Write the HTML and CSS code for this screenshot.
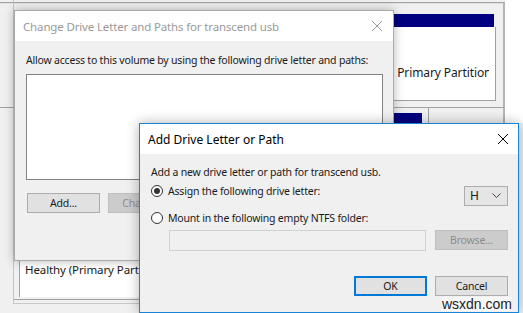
FILE: index.html
```html
<!DOCTYPE html>
<html>
<head>
  <meta charset="utf-8">
  <title>Add Drive Letter or Path</title>
  <link rel="stylesheet" href="styles.css">
</head>
<body>
  <div class="desktop">
    <!-- Disk management window behind the dialogs -->
    <div class="bg-top-line"></div>
    <div class="bg-left-line"></div>
    <div class="bg-left-hline"></div>
    <div class="bg-right-line"></div>
    <div class="bg-right-white"></div>

    <div class="vol-bar"></div>
    <div class="vol-box">
      <span class="vol-text">, Primary Partition</span>
    </div>
    <div class="vol-sep"></div>
    <div class="vol-bar small"></div>
    <div class="vol-tick"></div>

    <div class="part-box">
      <span>Healthy (Primary Parti</span>
    </div>
    <div class="part-line one"></div>
    <div class="part-line two"></div>

    <!-- Change Drive Letter and Paths (inactive) -->
    <div class="window change-dlg">
      <div class="titlebar">
        <span class="title">Change Drive Letter and Paths for transcend usb</span>
        <svg class="close" width="12" height="12" viewBox="0 0 12 12">
          <path d="M1 1 L11 11 M11 1 L1 11" stroke="currentColor" stroke-width="1" fill="none"/>
        </svg>
      </div>
      <div class="body">
        <div class="label">Allow access to this volume by using the following drive letter and paths:</div>
        <div class="listbox"></div>
        <div class="btn-row">
          <div class="btn">Add...</div>
          <div class="btn disabled">Change...</div>
        </div>
      </div>
    </div>

    <!-- Add Drive Letter or Path (active) -->
    <div class="window add-dlg">
      <div class="titlebar">
        <span class="title">Add Drive Letter or Path</span>
        <svg class="close" width="12" height="12" viewBox="0 0 12 12">
          <path d="M1 1 L11 11 M11 1 L1 11" stroke="currentColor" stroke-width="1" fill="none"/>
        </svg>
      </div>
      <div class="body">
        <div class="intro">Add a new drive letter or path for transcend usb.</div>
        <div class="option-row">
          <span class="radio checked"></span>
          <span class="option-label">Assign the following drive letter:</span>
          <div class="combo">
            <span>H</span>
            <svg width="9" height="6" viewBox="0 0 9 6">
              <path d="M0.5 0.5 L4.5 4.5 L8.5 0.5" stroke="#444" stroke-width="1" fill="none"/>
            </svg>
          </div>
        </div>
        <div class="option-row second">
          <span class="radio"></span>
          <span class="option-label">Mount in the following empty NTFS folder:</span>
        </div>
        <div class="folder-row">
          <div class="textbox"></div>
          <div class="btn disabled">Browse...</div>
        </div>
        <div class="dlg-buttons">
          <div class="btn default">OK</div>
          <div class="btn">Cancel</div>
        </div>
      </div>
      <div class="watermark">wsxdn.com</div>
    </div>
  </div>
</body>
</html>
```

FILE: styles.css
```css
* { box-sizing: border-box; }

body {
  margin: 0;
  font-family: "Noto Sans", "Open Sans", Arial, sans-serif;
  font-size: 10.5px;
  letter-spacing: -0.2px;
  color: #1a1a1a;
  background: #f0f0f0;
}

.desktop {
  position: relative;
  width: 523px;
  height: 313px;
  overflow: hidden;
  background: #f0f0f0;
}

/* background window pieces */
.bg-top-line {
  position: absolute;
  left: 0;
  top: 2px;
  width: 505px;
  height: 2px;
  background: #a5a5a5;
  border-bottom: 1px solid #e0e0e0;
}

.bg-left-line {
  position: absolute;
  left: 13px;
  top: 0;
  width: 1px;
  height: 304px;
  background: #c4c4c4;
}

.bg-left-hline {
  position: absolute;
  left: 0;
  top: 107px;
  width: 14px;
  height: 1px;
  background: #a0a0a0;
}

.bg-right-line {
  position: absolute;
  left: 503px;
  top: 3px;
  width: 2px;
  height: 120px;
  background: #b4b4b4;
}

.bg-right-white {
  position: absolute;
  left: 505px;
  top: 0;
  width: 18px;
  height: 123px;
  background: #fff;
}

.vol-bar {
  position: absolute;
  left: 380px;
  top: 14px;
  width: 114px;
  height: 13px;
  background: #000080;
}

.vol-bar.small {
  top: 113px;
  width: 42px;
  height: 10px;
}

.vol-box {
  position: absolute;
  left: 380px;
  top: 27px;
  width: 116px;
  height: 74px;
  background: #fff;
  border-right: 1px solid #a0a0a0;
  border-bottom: 1px solid #a0a0a0;
  padding: 38px 0 0 11px;
  white-space: nowrap;
  overflow: hidden;
  font-size: 12px;
  letter-spacing: -0.1px;
}

.vol-text {
  display: block;
  width: 98px;
  overflow: hidden;
  line-height: 16px;
}

.vol-sep {
  position: absolute;
  left: 380px;
  top: 107px;
  width: 124px;
  height: 1px;
  background: #a0a0a0;
}

.vol-tick {
  position: absolute;
  left: 428px;
  top: 107px;
  width: 1px;
  height: 16px;
  background: #a0a0a0;
}

.part-box {
  position: absolute;
  left: 19px;
  top: 250px;
  width: 120px;
  height: 47px;
  background: #fff;
  border-left: 1px solid #a0a0a0;
  padding: 12px 0 0 5px;
  white-space: nowrap;
  overflow: hidden;
  font-size: 11.5px;
  letter-spacing: -0.1px;
}

.part-line {
  position: absolute;
  left: 14px;
  width: 130px;
  height: 1px;
  background: #a0a0a0;
}

.part-line.one { top: 299px; }
.part-line.two { top: 303px; background: #c8c8c8; }

/* dialogs */
.window {
  position: absolute;
  display: flex;
  flex-direction: column;
  background: #f0f0f0;
}

.titlebar {
  display: flex;
  align-items: center;
  justify-content: space-between;
  height: 30px;
  background: #fff;
  font-size: 12px;
  letter-spacing: 0;
  flex-shrink: 0;
}

.change-dlg {
  left: 14px;
  top: 10px;
  width: 380px;
  height: 251px;
  border: 1px solid #aaa;
  box-shadow: 0 0 10px rgba(0,0,0,0.28);
}

.change-dlg .titlebar {
  padding: 0 10px 0 8px;
  color: #9a9a9a;
  font-size: 11.5px;
  letter-spacing: -0.15px;
}

.change-dlg .body {
  padding: 11px 10px 0 11px;
}

.label {
  line-height: 16px;
  margin-bottom: 6px;
  white-space: nowrap;
}

.listbox {
  width: 357px;
  height: 106px;
  background: #fff;
  border: 1px solid #828282;
}

.btn-row {
  display: flex;
  gap: 8px;
  margin-top: 13px;
  padding-left: 1px;
}

.btn {
  width: 73px;
  height: 20px;
  background: #e1e1e1;
  border: 1px solid #adadad;
  display: flex;
  align-items: center;
  justify-content: center;
  flex-shrink: 0;
}

.btn.disabled {
  background: #cccccc;
  border-color: #bfbfbf;
  color: #8c8c8c;
}

.btn.default {
  border: 2px solid #0078d7;
}

.add-dlg {
  left: 139px;
  top: 123px;
  width: 380px;
  height: 190px;
  border: 1px solid #1883d7;
  box-shadow: 0 0 12px rgba(0,0,0,0.3);
}

.add-dlg .titlebar {
  padding: 0 9px 0 8px;
  color: #000;
}

.add-dlg .body {
  padding: 10px 10px 0 11px;
  display: flex;
  flex-direction: column;
}

.intro {
  line-height: 16px;
}

.option-row {
  display: flex;
  align-items: center;
  height: 20px;
  margin-top: 1px;
}

.option-row.second {
  margin-top: 7px;
}

.radio {
  width: 12px;
  height: 12px;
  border: 1px solid #333;
  border-radius: 50%;
  background: #fff;
  display: flex;
  align-items: center;
  justify-content: center;
  margin-right: 5px;
  flex-shrink: 0;
}

.radio.checked::after {
  content: '';
  width: 6px;
  height: 6px;
  border-radius: 50%;
  background: #333;
}

.option-label {
  flex: 1;
}

.combo {
  width: 44px;
  height: 20px;
  margin-top: 9px;
  background: #e5e5e5;
  border: 1px solid #adadad;
  display: flex;
  align-items: center;
  justify-content: space-between;
  padding: 0 6px 0 5px;
  font-size: 12px;
}

.folder-row {
  display: flex;
  gap: 9px;
  margin-top: 2px;
  padding-left: 18px;
}

.textbox {
  width: 257px;
  height: 21px;
  background: #f0f0f0;
  border: 1px solid #d0d0d0;
}

.dlg-buttons {
  display: flex;
  justify-content: flex-end;
  gap: 8px;
  margin-top: 25px;
}

.watermark {
  position: absolute;
  right: 6px;
  bottom: 1px;
  font-family: "Liberation Sans", Arial, sans-serif;
  font-size: 14px;
  letter-spacing: 0;
  color: #222;
  background: rgba(255,255,255,0.45);
  line-height: 14px;
}
```
